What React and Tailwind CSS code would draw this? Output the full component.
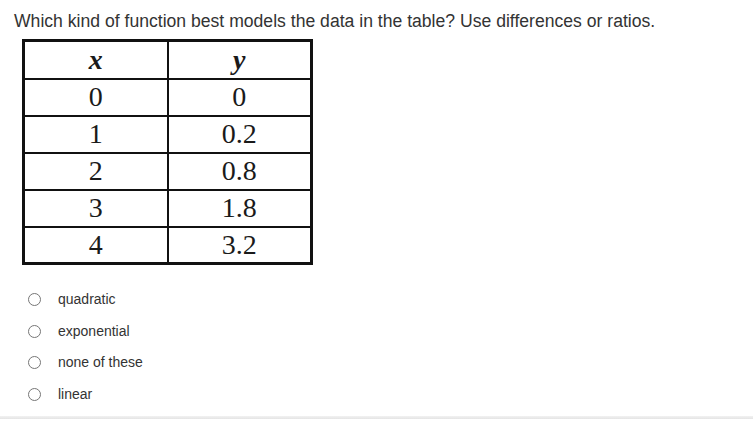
import React from 'react';

const rows = [
    ['0', '0'],
    ['1', '0.2'],
    ['2', '0.8'],
    ['3', '1.8'],
    ['4', '3.2'],
];

const options = ['quadratic', 'exponential', 'none of these', 'linear'];

export default function App() {
    const [picked, setPicked] = React.useState(null);

    return (
        <div className="w-[753px] h-[422px] bg-white flex flex-col font-['Liberation_Sans',Arial,sans-serif] overflow-hidden">
            <div className="flex-1 pl-[14px] pt-[9px]">
                <p className="text-[17.6px] leading-[24px] text-[#333]">
                    Which kind of function best models the data in the table? Use differences or ratios.
                </p>

                {/* tabla de datos */}
                <table className="mt-[6px] ml-[8px] border-collapse border-[3px] border-[#111] font-['Liberation_Serif','Times_New_Roman',serif] text-[28px] text-[#1a1a1a]">
                    <thead>
                        <tr className="h-[38px]">
                            <th className="w-[144px] border-2 border-[#111] p-0 leading-none font-bold italic">x</th>
                            <th className="w-[144px] border-2 border-[#111] p-0 leading-none font-bold italic">y</th>
                        </tr>
                    </thead>
                    <tbody>
                        {rows.map(([x, y]) => (
                            <tr key={x} className="h-[37px]">
                                <td className="border-2 border-[#111] p-0 text-center leading-none">{x}</td>
                                <td className="border-2 border-[#111] p-0 text-center leading-none">{y}</td>
                            </tr>
                        ))}
                    </tbody>
                </table>

                {/* opciones */}
                <div className="mt-[19px] ml-[14px] flex flex-col">
                    {options.map(opt => (
                        <label key={opt} className="h-[31.5px] flex items-center cursor-pointer">
                            <span className="w-[13px] h-[13px] rounded-full border border-[#767676] bg-white flex items-center justify-center"
                                onClick={() => setPicked(opt)}>
                                {picked === opt && <span className="w-[7px] h-[7px] rounded-full bg-[#333]" />}
                            </span>
                            <span className="ml-[17px] text-[14px] text-[#333]" onClick={() => setPicked(opt)}>{opt}</span>
                        </label>
                    ))}
                </div>
            </div>
            <div className="h-[3px] mb-[3px] bg-gradient-to-b from-[#f2f2f2] to-[#e4e4e4]" />
        </div>
    );
}
